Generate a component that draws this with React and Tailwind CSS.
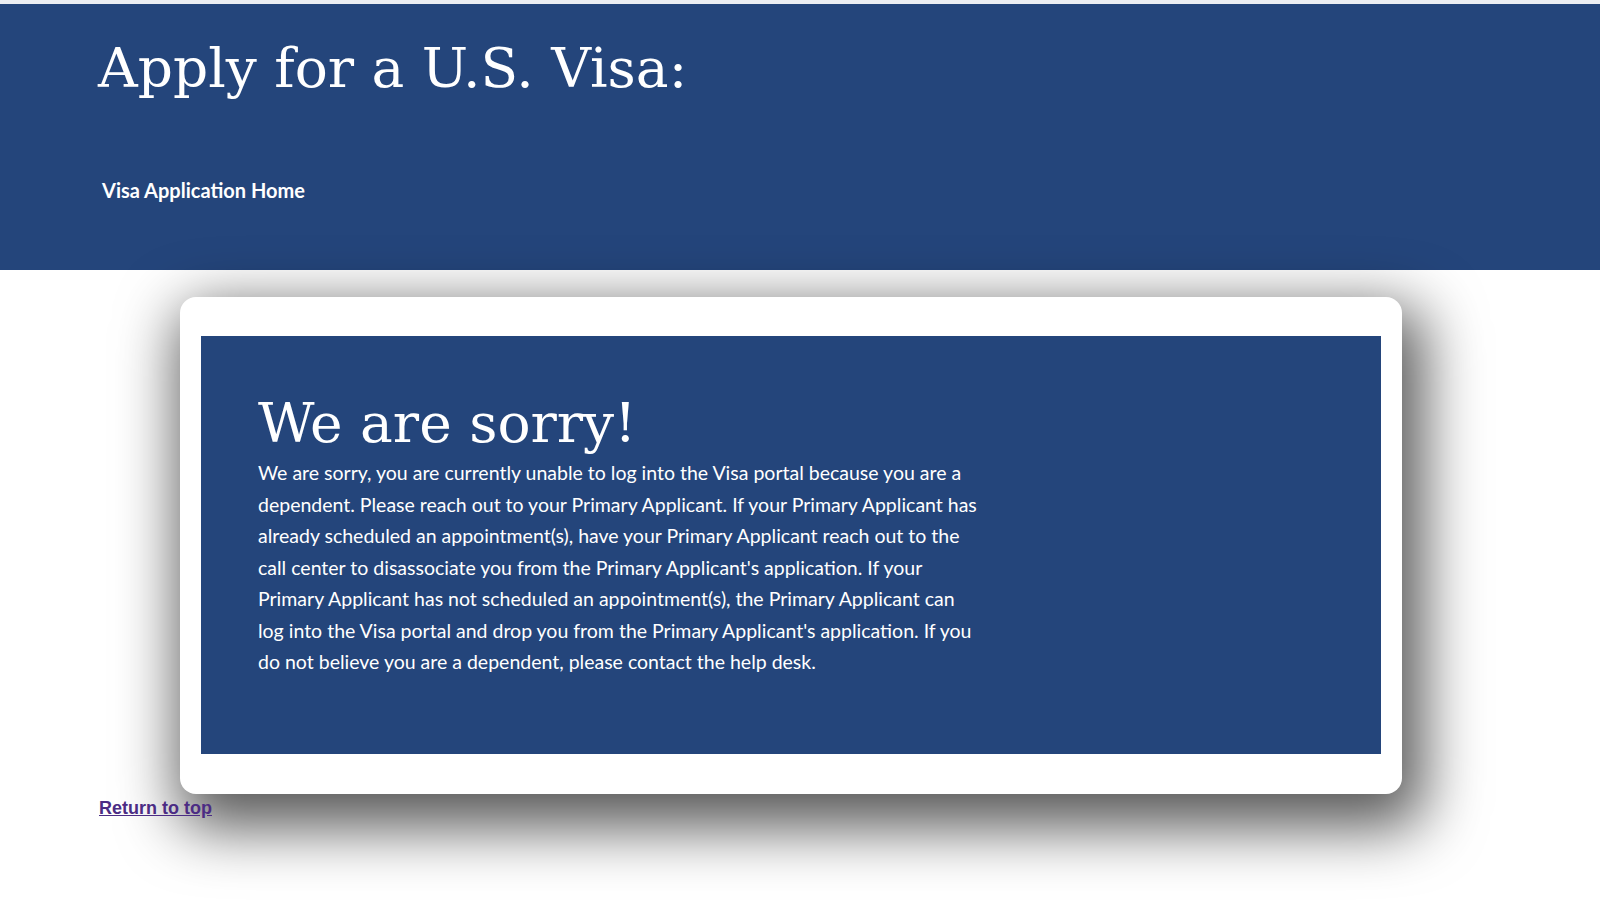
import React from 'react';

const bodyText =
  "We are sorry, you are currently unable to log into the Visa portal because you are a dependent. Please reach out to your Primary Applicant. If your Primary Applicant has already scheduled an appointment(s), have your Primary Applicant reach out to the call center to disassociate you from the Primary Applicant's application. If your Primary Applicant has not scheduled an appointment(s), the Primary Applicant can log into the Visa portal and drop you from the Primary Applicant's application. If you do not believe you are a dependent, please contact the help desk.";

function Header() {
  return (
    <header className="bg-[#24457b] h-[266px] pl-[98px]">
      <h1 className="pt-[37px] text-[55px] leading-none text-white font-['DejaVu_Serif',serif] font-normal">
        Apply for a U.S. Visa:
      </h1>
      <nav className="mt-[84px]">
        <a href="#" className="text-[20px] leading-none font-bold text-white font-['Lato',sans-serif] pl-[4px]">
          Visa Application Home
        </a>
      </nav>
    </header>
  );
}

function SorryCard() {
  return (
    <div className="ml-[180px] w-[1222px] bg-white rounded-[16px] px-[21px] pt-[39px] pb-[40px] shadow-[10px_22px_60px_12px_rgba(0,0,0,0.65)]">
      <div className="bg-[#24457b] h-[418px] pl-[57px] pt-[60px]">
        <h2 className="text-[55px] leading-none text-white font-['DejaVu_Serif',serif] font-normal">
          We are sorry!
        </h2>
        <p className="mt-[6px] max-w-[726px] text-[19.5px] leading-[31.5px] text-white font-['Lato',sans-serif]">
          {bodyText}
        </p>
      </div>
    </div>
  );
}

export default function App() {
  return (
    <div className="min-h-[900px] bg-white overflow-hidden">
      <div className="h-[4px] bg-[#eceef2]" />
      <Header />
      <main className="pt-[27px]">
        <SorryCard />
        <div className="pl-[99px] mt-[1px]">
          <a href="#top" className="text-[18px] font-bold underline text-[#4b2c84] font-['Liberation_Sans',Arial,sans-serif]">
            Return to top
          </a>
        </div>
      </main>
    </div>
  );
}
